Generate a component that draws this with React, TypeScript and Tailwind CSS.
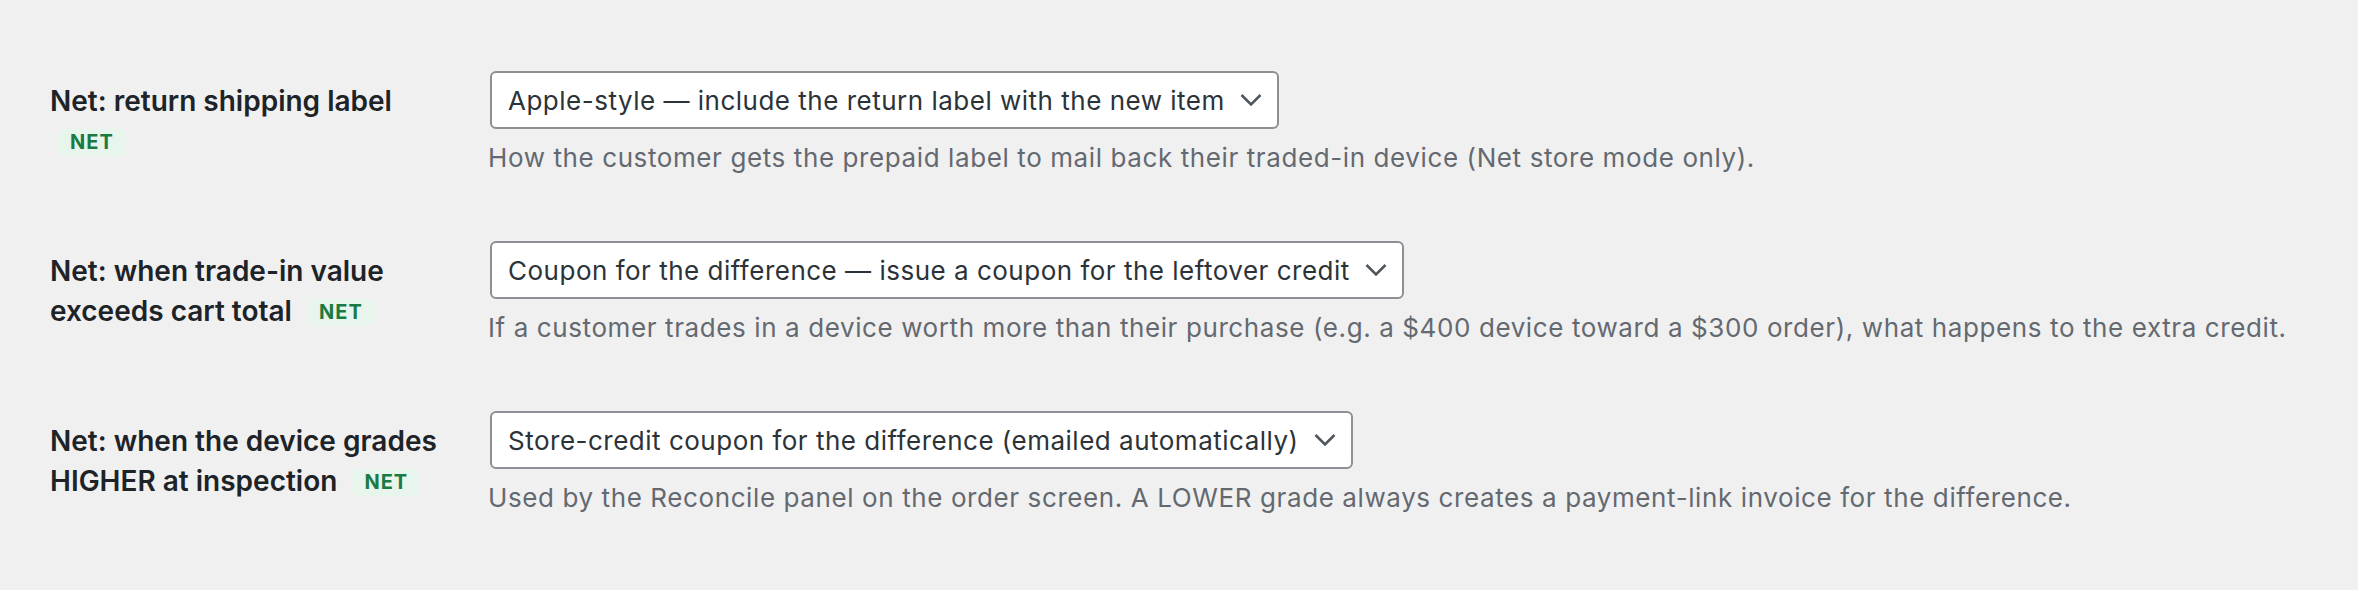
import React from "react";

type Row = {
  lines: string[];
  option: string;
  help: string;
};

const rows: Row[] = [
  {
    lines: ["Net: return shipping label"],
    option: "Apple-style — include the return label with the new item",
    help: "How the customer gets the prepaid label to mail back their traded-in device (Net store mode only).",
  },
  {
    lines: ["Net: when trade-in value", "exceeds cart total"],
    option: "Coupon for the difference — issue a coupon for the leftover credit",
    help: "If a customer trades in a device worth more than their purchase (e.g. a $400 device toward a $300 order), what happens to the extra credit.",
  },
  {
    lines: ["Net: when the device grades", "HIGHER at inspection"],
    option: "Store-credit coupon for the difference (emailed automatically)",
    help: "Used by the Reconcile panel on the order screen. A LOWER grade always creates a payment-link invoice for the difference.",
  },
];

function Chevron() {
  return (
    <svg width="22" height="13" viewBox="0 0 22 13" className="absolute right-[15px] top-1/2 -translate-y-1/2">
      <polyline points="1.5,1.5 11,11 20.5,1.5" fill="none" stroke="#50575e" strokeWidth="2.6" strokeLinejoin="miter" />
    </svg>
  );
}

function NetBadge() {
  return (
    <span className="ml-[8px] inline-block rounded-[6px] bg-[#e8f5ec] px-[12px] text-[20px] font-bold leading-[27px] tracking-[1px] text-[#1a7a43] align-[2px]">
      NET
    </span>
  );
}

export default function App() {
  return (
    <div
      className="min-h-[590px] w-full bg-[#f0f0f1] pl-[50px] pt-[41px]"
      style={{ fontFamily: "Inter, 'Noto Sans', sans-serif" }}
    >
      {rows.map((r) => (
        <div key={r.option} className="flex">
          <div className="w-[420px] shrink-0 pr-[20px] pt-[40px] text-[28px] font-semibold leading-[40px] text-[#1d2327]">
            {r.lines.map((line, i) => (
              <React.Fragment key={line}>
                <span>{line}</span>
                {i < r.lines.length - 1 ? <br /> : " "}
              </React.Fragment>
            ))}
            <NetBadge />
          </div>
          <div className="pl-[20px] pt-[30px] pb-[34px]">
            <div className="relative inline-flex h-[58px] items-center rounded-[6px] border-2 border-[#8c8f94] bg-white pl-[16px] pr-[52px] text-[26px] tracking-[0.5px] text-[#2c3338]">
              {r.option}
              <Chevron />
            </div>
            <p className="-ml-[2px] mt-[9px] text-[26px] leading-[39px] tracking-[0.6px] text-[#646970]">{r.help}</p>
          </div>
        </div>
      ))}
    </div>
  );
}
